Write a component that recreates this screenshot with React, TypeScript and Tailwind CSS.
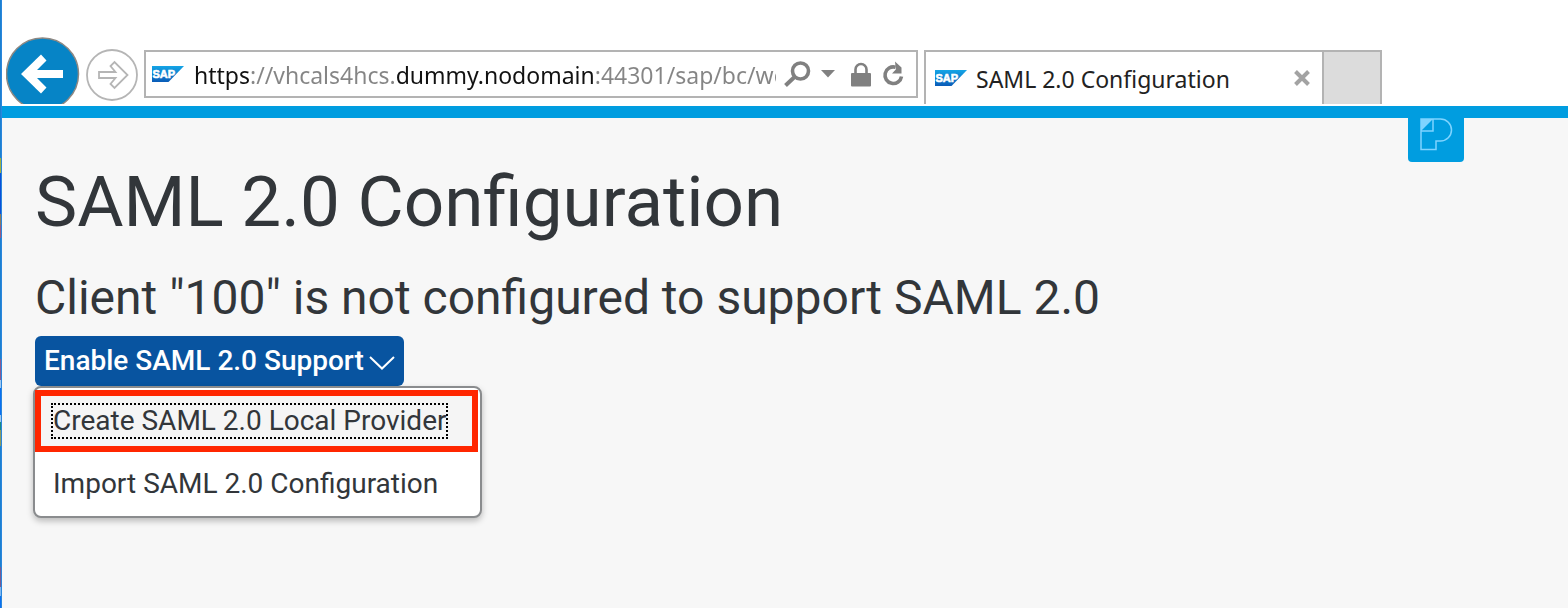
import React from "react";

function SapLogo({ id }: { id: string }) {
  return (
    <svg viewBox="0 0 32 16" className="h-4 w-8 shrink-0" role="img" aria-label="SAP">
      <defs>
        <linearGradient id={id} x1="0" y1="0" x2="0" y2="1">
          <stop offset="0" stopColor="#14a5e6" />
          <stop offset="1" stopColor="#0a5cb8" />
        </linearGradient>
      </defs>
      <path d="M0 0H32L16.500 16H0Z" fill={`url(#${id})`} />
      <text
        x="0.500"
        y="12"
        fontFamily="Liberation Sans, sans-serif"
        fontWeight="700"
        fontSize="11"
        fill="#fff"
        stroke="#fff"
        strokeWidth="0.600"
      >
        SAP
      </text>
    </svg>
  );
}

function BackIcon() {
  return (
    <svg viewBox="0 0 74 67" className="h-[67px] w-[74px]" aria-hidden="true">
      <circle cx="36.500" cy="37" r="36" fill="#0684c6" stroke="#8d8883" strokeWidth="1.500" />
      <path d="M15 37L35 17.500L40.500 23.500L31 33H57V41H31L40.500 50.500L35 56.500Z" fill="#fff" />
    </svg>
  );
}

function ForwardIcon() {
  return (
    <svg viewBox="0 0 54 54" className="size-[54px]" fill="none" stroke="#b5b5b5" aria-hidden="true">
      <circle cx="27" cy="27" r="25" strokeWidth="1.800" />
      <path d="M14 24H30.500L25.500 18L29.500 14L42.500 27L29.500 40L25.500 36L30.500 30H14Z" strokeWidth="1.800" />
    </svg>
  );
}

export default function App() {
  return (
    <div className="flex min-h-screen bg-[#f7f7f7] font-['Roboto','Liberation_Sans',sans-serif] text-[#32363a]">
      <div className="w-[2px] shrink-0 border-r border-[#2a86dc] bg-[linear-gradient(180deg,#1c80d0_0_158px,#a0b040_158px_173px,#0a50d8_173px_214px,#8a7a60_214px_225px,#9a5a80_225px_238px,#1c80d0_238px_359px,#8a5a90_359px_380px,#a0c8f0_380px_388px,#0a70f0_388px_415px,#a0c8f0_415px_422px,#1a8a80_422px_430px,#8a9a60_430px_446px,#1c80d0_446px_567px,#7a5a90_567px_587px,#80b8f0_587px_596px,#0a70f0_596px)]" />
      <div className="min-w-0 flex-1">
        <header className="flex h-[106px] items-end overflow-hidden border-b-2 border-white bg-white pl-1 font-['Noto_Sans','Liberation_Sans',sans-serif]">
          <button type="button" aria-label="Back" className="shrink-0">
            <BackIcon />
          </button>
          <button type="button" aria-label="Forward" className="ml-[5px] shrink-0 pb-[2px]">
            <ForwardIcon />
          </button>
          <div className="mb-[6px] ml-[5px] flex h-[48px] w-[774px] items-center border-2 border-[#b3b3b3] pr-[10px] pl-[6px]">
            <SapLogo id="address-logo" />
            <input
              aria-label="Address"
              type="text"
              defaultValue="https://vhcals4hcs.dummy.nodomain:44301/sap/bc/webdynpro/sap/saml2"
              className="ml-[10px] w-[582px] min-w-0 bg-[linear-gradient(90deg,#111_0_56px,#858585_56px_202px,#111_202px_401px,#858585_401px)] bg-clip-text pt-[2px] text-[23px] leading-8 text-transparent outline-none"
            />
            <button type="button" aria-label="Search" className="ml-[7px] shrink-0">
              <svg viewBox="0 0 28 28" className="size-7" fill="none" stroke="#808080" aria-hidden="true">
                <circle cx="17.500" cy="11" r="8" strokeWidth="3.600" />
                <path d="M11.500 17L2.500 25.500" strokeWidth="4" />
              </svg>
            </button>
            <button type="button" aria-label="Show addresses" className="ml-[10px] shrink-0">
              <svg viewBox="0 0 14 8" className="h-2 w-[14px]" fill="#808080" aria-hidden="true">
                <path d="M0 0H14L7 7.500Z" />
              </svg>
            </button>
            <button type="button" aria-label="Security report" className="ml-[16px] shrink-0">
              <svg viewBox="0 0 20 25" className="h-[25px] w-5" aria-hidden="true">
                <rect x="0" y="11" width="20" height="13.500" rx="1" fill="#808080" />
                <path d="M4.500 12V7.500a5.500 5.500 0 0 1 11 0V12" fill="none" stroke="#808080" strokeWidth="2.600" />
              </svg>
            </button>
            <button type="button" aria-label="Refresh" className="ml-[11px] shrink-0">
              <svg viewBox="0 0 22 26" className="h-[26px] w-[22px]" aria-hidden="true">
                <path d="M13.500 6.200A8.300 8.300 0 1 0 19.500 15.500" fill="none" stroke="#808080" strokeWidth="3.600" />
                <path d="M13 0.500L19.500 6.500V12.500H10L13.800 8.500Z" fill="#808080" />
              </svg>
            </button>
          </div>
          <div className="ml-[6px] flex h-[54px] w-[400px] items-center border-2 border-b-0 border-[#b3b3b3] pr-[12px] pl-[9px]">
            <SapLogo id="tab-logo" />
            <span className="ml-[9px] flex-1 pt-[2px] text-[23px] leading-8 whitespace-nowrap text-[#222]">
              SAML 2.0 Configuration
            </span>
            <button type="button" aria-label="Close tab" className="shrink-0">
              <svg viewBox="0 0 16 16" className="size-4" stroke="#a3a3a3" strokeWidth="4" aria-hidden="true">
                <path d="M1.500 1.500L14.500 14.500M14.500 1.500L1.500 14.500" />
              </svg>
            </button>
          </div>
          <button
            type="button"
            aria-label="New tab"
            className="h-[54px] w-[58px] shrink-0 border-t-2 border-r-2 border-[#b3b3b3] bg-[#dcdcdc]"
          />
        </header>
        <div className="flex h-[12px] items-start justify-end bg-[#009de0] pr-[104px]">
          <button
            type="button"
            aria-label="Personalize"
            className="mt-[10px] flex h-[46px] w-[56px] shrink-0 justify-center rounded-b-[4px] bg-[#009de0] pt-[2px]"
          >
            <svg viewBox="0 0 34 34" className="size-[34px]" fill="none" stroke="#7fd4ff" strokeWidth="1.500" aria-hidden="true">
              <path d="M2 1H21.500a11 11 0 0 1 0 22H17V31.500H2Z" />
              <path d="M14 1V13H2" />
              <path d="M2 1H14L2 13Z" fill="#7fd4ff" stroke="none" />
            </svg>
          </button>
        </div>
        <main className="px-[33px] pt-[41px]">
          <h1 className="text-[71px] leading-[86px] whitespace-nowrap">SAML 2.0 Configuration</h1>
          <h2 className="mt-[23px] text-[48px] leading-[60px] whitespace-nowrap">
            Client "100" is not configured to support SAML 2.0
          </h2>
          <div className="relative mt-[8px] w-fit">
            <button
              type="button"
              aria-haspopup="menu"
              aria-expanded="true"
              className="flex h-[50px] items-center gap-[5px] rounded-[6px] bg-[#0854a0] px-[9px] text-[28px] font-medium whitespace-nowrap text-white"
            >
              Enable SAML 2.0 Support
              <svg viewBox="0 0 26 14" className="mt-1 h-[14px] w-[26px]" fill="none" stroke="#fff" strokeWidth="2" aria-hidden="true">
                <path d="M1 1L13 12.500L25 1" />
              </svg>
            </button>
            <ul
              role="menu"
              className="absolute top-full -left-[2px] w-[449px] rounded-[8px] border-2 border-[#8a8c8e] bg-white pt-[2px] pr-[2px] text-[28px] leading-8 shadow-[0_3px_6px_rgba(0,0,0,0.25)]"
            >
              <li role="none">
                <button
                  type="button"
                  role="menuitem"
                  className="flex h-[62px] w-full items-center border-[6px] border-[#ff2600] bg-[#f5f5f5] pl-[12px] whitespace-nowrap"
                >
                  <span className="outline-2 outline-dotted outline-black">Create SAML 2.0 Local Provider</span>
                </button>
              </li>
              <li role="none">
                <button type="button" role="menuitem" className="flex h-[64px] w-full items-center pl-[18px] whitespace-nowrap">
                  Import SAML 2.0 Configuration
                </button>
              </li>
            </ul>
          </div>
        </main>
      </div>
    </div>
  );
}
